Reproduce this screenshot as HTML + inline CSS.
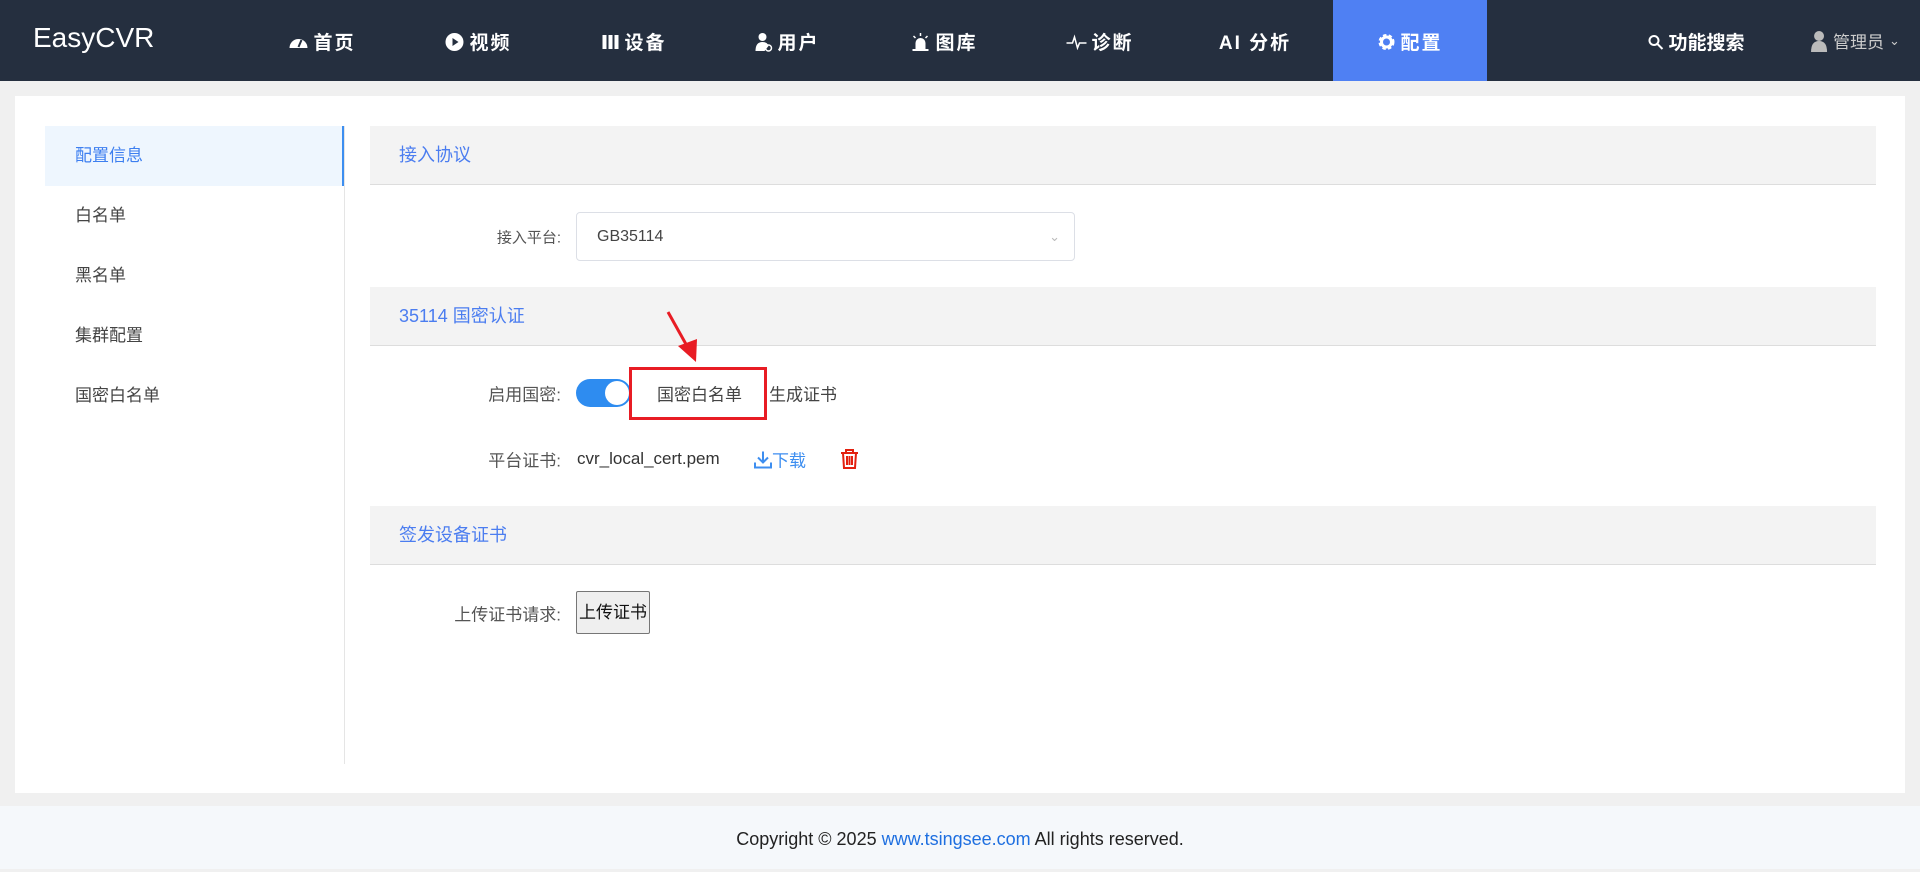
<!DOCTYPE html>
<html><head><meta charset="utf-8"><style>
*{margin:0;padding:0;box-sizing:border-box}
body{width:1920px;height:869px;background:#f0f0f0;font-family:"Liberation Sans","Noto Sans CJK SC",sans-serif;position:relative;overflow:hidden;color:#333}
.nav{position:absolute;left:0;top:0;width:1920px;height:81px;background:#252f3f;color:#fff}
.logo{position:absolute;left:33px;top:22px;font-size:28px;color:#fff}
.ni{position:absolute;top:28px;font-size:19px;font-weight:bold;transform:translateX(-50%);white-space:nowrap;letter-spacing:2px;display:flex;align-items:center;gap:5px}
.act{position:absolute;left:1333px;top:0;width:154px;height:81px;background:#4f80f3}
.card{position:absolute;left:15px;top:96px;width:1890px;height:697px;background:#fff}
.side{position:absolute;left:45px;top:126px;width:299px}
.si{height:60px;line-height:60px;padding-left:30px;font-size:17px;color:#444}
.si.a{background:#eef6fe;color:#3d7ff0;border-right:2px solid #3d8ef0}
.vl{position:absolute;left:344px;top:126px;width:1px;height:638px;background:#e5e5e5}
.sh{position:absolute;left:370px;width:1506px;height:59px;background:#f3f3f3;border-bottom:1px solid #ddd;color:#4b7df0;font-size:18px;line-height:59px;padding-left:29px}
.lb{position:absolute;right:1359px;font-size:17px;color:#555;transform:translateY(-50%);white-space:nowrap}
.ab{position:absolute;transform:translateY(-50%);font-size:17px;white-space:nowrap}
.foot{position:absolute;left:0;top:806px;width:1920px;height:63px;background:#f5f8fb;text-align:center;line-height:66px;font-size:18px;color:#222}
</style></head><body>
<div class="nav">
<div class="logo">EasyCVR</div>
<div class="act"></div>
<div class="ni" style="left:322px"><svg width="20" height="16" viewBox="0 0 20 16"><path d="M1 14A9 9 0 1 1 19 14Z" fill="#fff"/><path d="M10 13L13 6" stroke="#252f3f" stroke-width="2"/></svg>首页</div>
<div class="ni" style="left:478px"><svg width="20" height="20"><circle cx="10" cy="10" r="9" fill="#fff"/><path d="M8 6L14 10L8 14Z" fill="#252f3f"/></svg>视频</div>
<div class="ni" style="left:634px"><svg width="18" height="18"><rect x="1" y="2" width="16" height="14" fill="#fff"/><path d="M6 2V16M12 2V16" stroke="#252f3f" stroke-width="2"/></svg>设备</div>
<div class="ni" style="left:787px"><svg width="18" height="20"><circle cx="8" cy="5" r="4" fill="#fff"/><path d="M1 19Q1 10 8 10Q13 10 14 14L10 19Z" fill="#fff"/><circle cx="14" cy="16" r="3" fill="none" stroke="#fff" stroke-width="1.5"/></svg>用户</div>
<div class="ni" style="left:944px"><svg width="20" height="20"><path d="M5 18V11A5 5 0 0 1 15 11V18Z" fill="#fff"/><rect x="2" y="17" width="16" height="2" fill="#fff"/><path d="M10 1V4M3 4L5 6M17 4L15 6" stroke="#fff" stroke-width="1.5"/></svg>图库</div>
<div class="ni" style="left:1100px"><svg width="20" height="16"><path d="M0 9H6L8 3L11 14L13 9H20" fill="none" stroke="#fff" stroke-width="1.5"/></svg>诊断</div>
<div class="ni" style="left:1255px">AI 分析</div>
<div class="ni" style="left:1410px"><svg width="18" height="18"><circle cx="9" cy="9" r="6" fill="none" stroke="#fff" stroke-width="4" stroke-dasharray="3 2"/><circle cx="9" cy="9" r="5" fill="none" stroke="#fff" stroke-width="3"/></svg>配置</div>
<div class="ni" style="left:1696px;letter-spacing:0"><svg width="16" height="16"><circle cx="6.5" cy="6.5" r="4.5" fill="none" stroke="#fff" stroke-width="2"/><path d="M10 10L15 15" stroke="#fff" stroke-width="2"/></svg>功能搜索</div>
<div class="ni" style="left:1855px;font-weight:normal;font-size:17px;color:#ccc;letter-spacing:0"><svg width="18" height="22"><circle cx="9" cy="6" r="5" fill="#bbb"/><path d="M1 22Q1 11 9 11Q17 11 17 22Z" fill="#bbb"/></svg>管理员 <span style="font-size:13px">&#8964;</span></div>
</div>
<div class="card"></div>
<div class="side">
<div class="si a">配置信息</div><div class="si">白名单</div><div class="si">黑名单</div><div class="si">集群配置</div><div class="si">国密白名单</div>
</div>
<div class="vl"></div>
<div class="sh" style="top:126px">接入协议</div>
<div class="lb" style="top:237px;font-size:15px">接入平台:</div>
<div style="position:absolute;left:576px;top:212px;width:499px;height:49px;border:1px solid #dcdfe6;border-radius:4px;font-size:16px;line-height:47px;padding-left:20px;color:#444">GB35114<span style="position:absolute;right:14px;top:0;color:#bbb;font-size:13px">&#8964;</span></div>
<div class="sh" style="top:287px">35114 国密认证</div>
<div class="lb" style="top:393px">启用国密:</div>
<div style="position:absolute;left:576px;top:379px;width:55px;height:28px;border-radius:14px;background:#2e8cf0"><div style="position:absolute;right:2px;top:2px;width:24px;height:24px;border-radius:50%;background:#fff"></div></div>
<div style="position:absolute;left:629px;top:367px;width:138px;height:53px;border:3px solid #e81c24"></div>
<div class="ab" style="left:657px;top:393px;color:#444">国密白名单</div>
<div class="ab" style="left:769px;top:393px;color:#444">生成证书</div>
<svg style="position:absolute;left:660px;top:308px" width="42" height="58"><path d="M8 4L27 38" stroke="#e81c24" stroke-width="3"/><path d="M18 38L37 31L36 54Z" fill="#e81c24"/></svg>
<div class="lb" style="top:459px">平台证书:</div>
<div class="ab" style="left:577px;top:459px;color:#333">cvr_local_cert.pem</div>
<div class="ab" style="left:754px;top:459px;color:#3d8ef0;display:flex;align-items:center"><svg width="18" height="18"><path d="M9 1V12M4 7L9 12L14 7M1 12V17H17V12" fill="none" stroke="#3d8ef0" stroke-width="2"/></svg>下载</div>
<svg style="position:absolute;left:840px;top:449px" width="19" height="20"><path d="M1 4H18M6 4V1H13V4M3 4L4 19H15L16 4M7 7V16M9.5 7V16M12 7V16" fill="none" stroke="#e3200f" stroke-width="2"/></svg>
<div class="sh" style="top:506px">签发设备证书</div>
<div class="lb" style="top:613px">上传证书请求:</div>
<div style="position:absolute;left:576px;top:591px;width:74px;height:43px;border:1px solid #767676;border-radius:2px;background:#efefef;font-size:17px;line-height:41px;text-align:center;color:#111">上传证书</div>
<div class="foot">Copyright © 2025 <span style="color:#1e6fe0">www.tsingsee.com</span> All rights reserved.</div>
</body></html>
